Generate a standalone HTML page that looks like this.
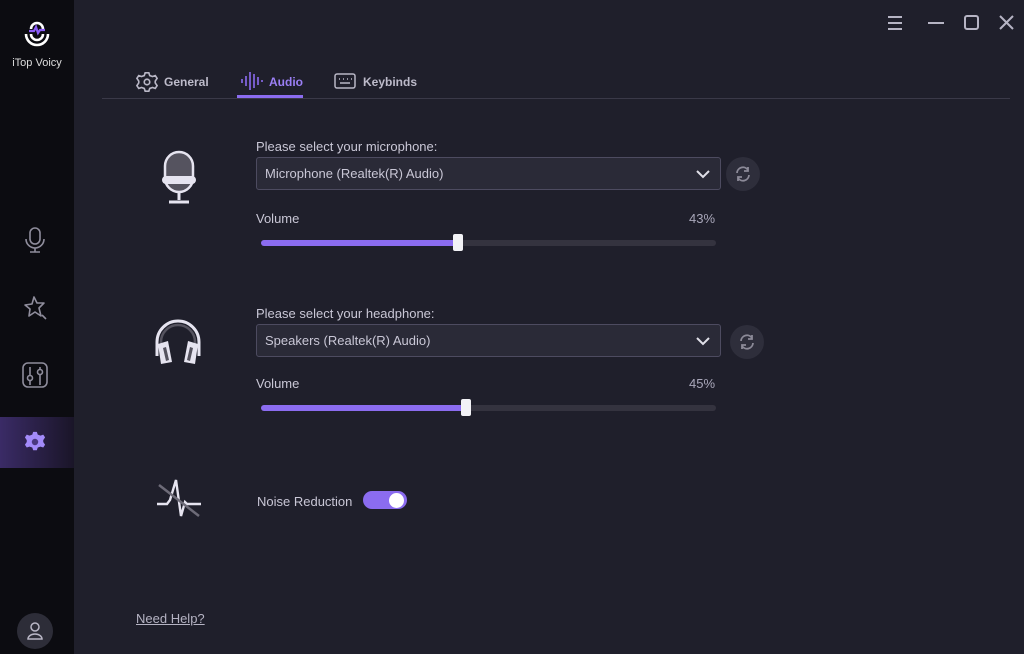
<!DOCTYPE html>
<html><head><meta charset="utf-8"><style>
*{margin:0;padding:0;box-sizing:border-box}
body{width:1024px;height:654px;background:#1f1f2b;font-family:"Liberation Sans",sans-serif;position:relative;overflow:hidden;color:#d8d6e4}
.side{position:absolute;left:0;top:0;width:74px;height:654px;background:#0c0c11}
.abs{position:absolute}
.t{font-size:13px;color:#c9c7d6}
.dd{position:absolute;left:256px;width:465px;height:33px;background:#2a2a37;border:1px solid #4d4b60;border-radius:3px;font-size:13px;color:#c9c7d6;padding:8px 0 0 8px}
.rf{position:absolute;width:34px;height:34px;border-radius:50%;background:#2e2e3b}
.track{position:absolute;left:261px;width:455px;height:6px;border-radius:3px;background:#34333f}
.fill{position:absolute;left:0;top:0;height:6px;border-radius:3px;background:#8b6cf0}
.thumb{position:absolute;width:10px;height:17px;background:#f2f2f6;border-radius:2px;top:-6px}
</style></head><body>
<div class="side">
 <svg class="abs" style="left:18px;top:12px" width="38" height="40" viewBox="0 0 38 40" fill="none"><path d="M13 17a6 6 0 0 1 12 0" stroke="#fff" stroke-width="2.6"/><path d="M13 22a6 6 0 0 0 12 0" stroke="#fff" stroke-width="2.6"/><path d="M8 22a11 11 0 0 0 22 0" stroke="#fff" stroke-width="2.6"/><path d="M11 19h5l2-4 2 6 2-3h5" stroke="#8b5cf6" stroke-width="2.2"/></svg>
 <div class="abs" style="left:0;width:74px;top:57px;text-align:center;font-size:11px;color:#ddd">iTop Voicy</div>
 <svg class="abs" style="left:24px;top:227px" width="22" height="28" viewBox="0 0 22 28" fill="none" stroke="#8f8d9c" stroke-width="1.6"><rect x="6" y="1" width="10" height="16" rx="5"/><path d="M2 12a9 9 0 0 0 18 0M11 21v4M6 25h10"/></svg>
 <svg class="abs" style="left:23px;top:295px" width="26" height="28" viewBox="0 0 26 28" fill="none" stroke="#8f8d9c" stroke-width="1.6" stroke-linejoin="round"><path d="M11 2l3 6 7 0-5 5 2 8-6-4-6 4 1-7-5-4 7-1z"/><path d="M19 20l4 4"/></svg>
 <svg class="abs" style="left:22px;top:362px" width="26" height="26" viewBox="0 0 26 26" fill="none" stroke="#8f8d9c" stroke-width="1.6"><rect x="1" y="1" width="24" height="24" rx="5"/><path d="M8 5v18M18 5v18"/><circle cx="8" cy="16" r="2.5" fill="#0c0c11"/><circle cx="18" cy="10" r="2.5" fill="#0c0c11"/></svg>
 <div class="abs" style="left:0;top:417px;width:74px;height:51px;background:linear-gradient(90deg,#3a2b66,#1a1528)"></div>
 <svg class="abs" style="left:24px;top:431px" width="22" height="22" viewBox="0 0 24 24"><path fill="#a38bfa" d="M10 1h4l1 3 3 1 3-1 2 3-2 3v2l2 3-2 3-3-1-3 1-1 3h-4l-1-3-3-1-3 1-2-3 2-3v-2L1 7l2-3 3 1 3-1z"/><circle cx="12" cy="12" r="3.5" fill="#4a3880"/></svg>
 <div class="abs" style="left:17px;top:613px;width:36px;height:36px;border-radius:50%;background:#2d2d38"></div>
 <svg class="abs" style="left:26px;top:621px" width="18" height="20" viewBox="0 0 18 20" fill="none" stroke="#b9b7c6" stroke-width="1.5"><circle cx="9" cy="6" r="4"/><path d="M2 18a7 5 0 0 1 14 0z"/></svg>
</div>
<svg class="abs" style="left:886px;top:14px" width="130" height="18" viewBox="0 0 130 18" fill="none" stroke="#b6b4c4" stroke-width="2"><path d="M2 3h14M2 9h14M2 15h14"/><path d="M42 9h16"/><rect x="79" y="2" width="13" height="13" rx="2"/><path d="M114 2l13 13M127 2l-13 13"/></svg>
<svg class="abs" style="left:136px;top:71px" width="22" height="22" viewBox="0 0 24 24" fill="none" stroke="#b9b7c6" stroke-width="1.8"><path d="M10 2h4l1 3 3 1 3-1 2 3-2 3v2l2 3-2 3-3-1-3 1-1 3h-4l-1-3-3-1-3 1-2-3 2-3v-2L1 8l2-3 3 1 3-1z"/><circle cx="12" cy="12" r="3"/></svg>
<div class="abs" style="left:164px;top:75px;font-size:12px;font-weight:bold;color:#bdbbca">General</div>
<svg class="abs" style="left:241px;top:71px" width="22" height="20" viewBox="0 0 22 20" stroke="#8b6cf0" stroke-width="1.6"><path d="M1 8v4M5 5v10M9 1v18M13 3v14M17 6v8M21 9v2"/></svg>
<div class="abs" style="left:269px;top:75px;font-size:12px;font-weight:bold;color:#9b7ff5">Audio</div>
<div class="abs" style="left:237px;top:95px;width:66px;height:3px;background:#8b6cf0"></div>
<svg class="abs" style="left:334px;top:73px" width="22" height="16" viewBox="0 0 22 16" fill="none" stroke="#b9b7c6" stroke-width="1.5"><rect x="1" y="1" width="20" height="14" rx="2"/><path d="M5 6h1M9 6h1M13 6h1M17 6h1M6 10h10"/></svg>
<div class="abs" style="left:363px;top:75px;font-size:12px;font-weight:bold;color:#bdbbca">Keybinds</div>
<div class="abs" style="left:102px;top:98px;width:908px;height:1px;background:#3a3948"></div>

<svg class="abs" style="left:158px;top:150px" width="42" height="58" viewBox="0 0 42 58"><rect x="7" y="2" width="28" height="40" rx="14" fill="#55535f" stroke="#e6e4f0" stroke-width="2.5"/><rect x="4" y="26" width="34" height="8" rx="4" fill="#e6e4f0"/><path d="M21 42v8M11 52h20" stroke="#e6e4f0" stroke-width="3"/></svg>
<div class="abs t" style="left:256px;top:139px">Please select your microphone:</div>
<div class="dd" style="top:157px">Microphone (Realtek(R) Audio)</div>
<svg class="abs" style="left:696px;top:170px" width="14" height="9" viewBox="0 0 14 9" fill="none" stroke="#e0dfe8" stroke-width="2"><path d="M1 1l6 6 6-6"/></svg>
<div class="rf" style="left:726px;top:157px"></div>
<svg class="abs" style="left:734px;top:165px" width="18" height="18" viewBox="0 0 18 18" fill="none" stroke="#8c8a98" stroke-width="1.8"><path d="M3 8a6 6 0 0 1 11-3M15 10a6 6 0 0 1-11 3"/><path d="M14 2v4h-4M4 16v-4h4"/></svg>
<div class="abs t" style="left:256px;top:211px">Volume</div>
<div class="abs t" style="left:689px;top:211px;color:#a9a7ba">43%</div>
<div class="track" style="top:240px"><div class="fill" style="width:197px"></div><div class="thumb" style="left:192px"></div></div>

<svg class="abs" style="left:153px;top:318px" width="50" height="48" viewBox="0 0 50 48"><path d="M4 38V24a21 21 0 0 1 42 0v14" fill="none" stroke="#e6e4f0" stroke-width="3"/><path d="M8 36V24a17 17 0 0 1 34 0v12" fill="none" stroke="#55535f" stroke-width="2.5"/><path d="M5 26l10-3 4 21-11 2z" fill="#e6e4f0"/><path d="M45 26l-10-3-4 21 11 2z" fill="#e6e4f0"/><path d="M10 30l3-1 3 13-3 1z" fill="#55535f"/><path d="M40 30l-3-1-3 13 3 1z" fill="#55535f"/></svg>
<div class="abs t" style="left:256px;top:306px">Please select your headphone:</div>
<div class="dd" style="top:324px">Speakers (Realtek(R) Audio)</div>
<svg class="abs" style="left:696px;top:337px" width="14" height="9" viewBox="0 0 14 9" fill="none" stroke="#e0dfe8" stroke-width="2"><path d="M1 1l6 6 6-6"/></svg>
<div class="rf" style="left:730px;top:325px"></div>
<svg class="abs" style="left:738px;top:333px" width="18" height="18" viewBox="0 0 18 18" fill="none" stroke="#8c8a98" stroke-width="1.8"><path d="M3 8a6 6 0 0 1 11-3M15 10a6 6 0 0 1-11 3"/><path d="M14 2v4h-4M4 16v-4h4"/></svg>
<div class="abs t" style="left:256px;top:376px">Volume</div>
<div class="abs t" style="left:689px;top:376px;color:#a9a7ba">45%</div>
<div class="track" style="top:405px"><div class="fill" style="width:205px"></div><div class="thumb" style="left:200px"></div></div>

<svg class="abs" style="left:155px;top:476px" width="48" height="44" viewBox="0 0 48 44" fill="none"><path d="M2 28h10l3-4 6-20 5 36 4-14 2 2h14" stroke="#e6e4f0" stroke-width="2.4"/><path d="M4 9l40 31" stroke="#6d6b78" stroke-width="2.5"/></svg>
<div class="abs t" style="left:257px;top:494px">Noise Reduction</div>
<div class="abs" style="left:363px;top:491px;width:44px;height:18px;border-radius:9px;background:#8b6cf0"></div>
<div class="abs" style="left:389px;top:493px;width:15px;height:15px;border-radius:50%;background:#fff"></div>
<div class="abs" style="left:136px;top:611px;font-size:13px;color:#b5b3c3;text-decoration:underline">Need Help?</div>
</body></html>
